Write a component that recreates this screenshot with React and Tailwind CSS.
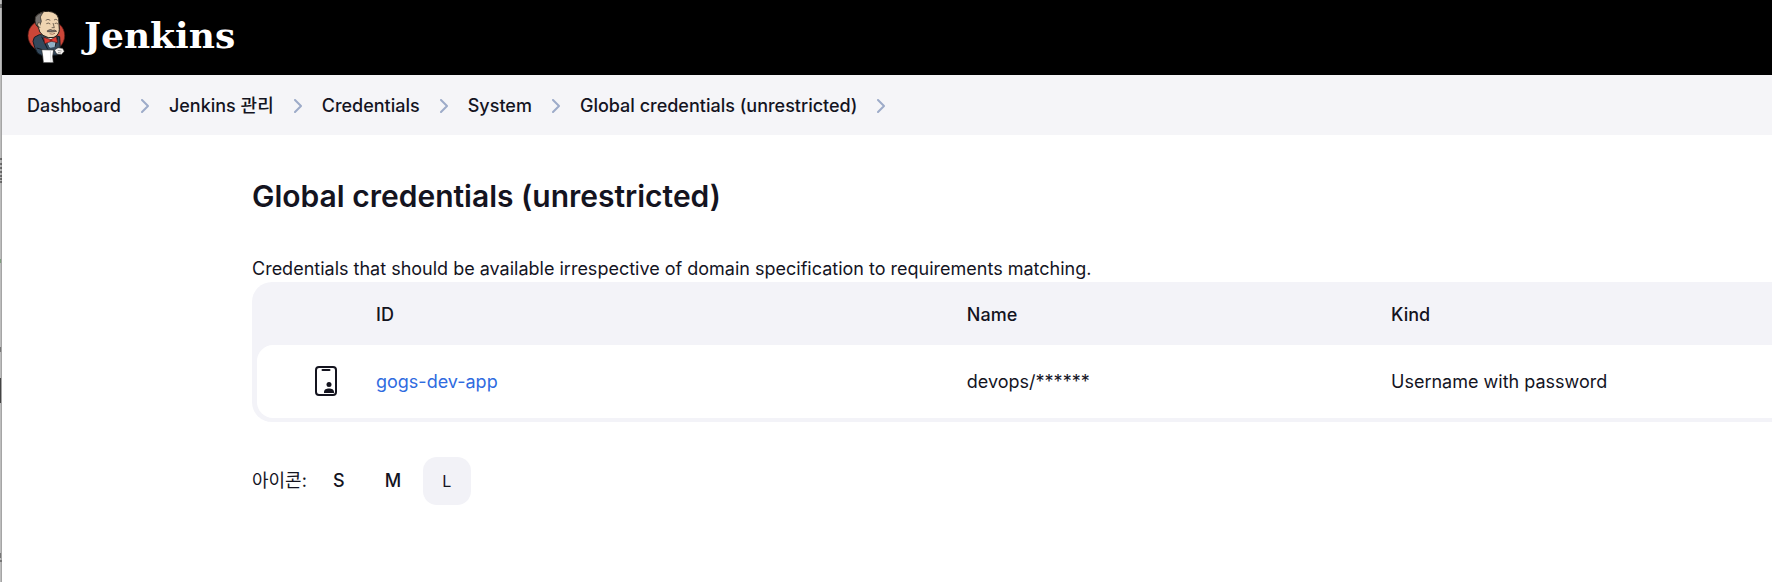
// App.jsx - Jenkins global credentials page
import React, { useState } from 'react';

const crumbs = ['Dashboard', 'Jenkins 관리', 'Credentials', 'System', 'Global credentials (unrestricted)'];

const credentials = [
  { id: 'gogs-dev-app', name: 'devops/******', kind: 'Username with password' },
];

const iconSizes = ['S', 'M', 'L'];

const JenkinsLogo = () => (
  <svg viewBox="84 30 117 162" className="h-[54px] w-[39px]" aria-hidden="true">
    <ellipse cx="142" cy="107" rx="55" ry="50" fill="#cc4638" stroke="#5c1d17" strokeWidth="2" />
    {/* suit */}
    <path d="M121 104 L106 112 L102 124 L107 142 L116 160 L130 167 L176 165 L184 150 L182 110 L166 106 Z" fill="#34495c" stroke="#121a22" strokeWidth="3" />
    <path d="M140 116 L152 142 L168 140 L171 112 Z" fill="#f2f2ee" />
    <path d="M144 124 L154 143 L167 141 L168 124 Z" fill="#8fb0c6" />
    <path d="M128 110 L146 148 M176 112 L168 140 M113 144 L130 149" stroke="#121a22" strokeWidth="3" fill="none" />
    {/* head */}
    <path d="M110 50 Q124 33 148 34 Q174 36 179 56 L181 88 Q181 104 165 112 Q148 117 132 106 Q120 98 118 82 Q106 76 110 50 Z" fill="#efd4b1" stroke="#241f1b" strokeWidth="3" />
    <path d="M109 52 Q116 40 132 37 L124 51 L127 64 L121 80 Q105 76 109 52 Z" fill="#77736f" stroke="#241f1b" strokeWidth="2" />
    <path d="M121 68 Q115 66 116 75 Q118 84 124 82" fill="#efd4b1" stroke="#241f1b" strokeWidth="2" />
    <path d="M140 61 Q147 55 154 61 M165 60 Q171 55 176 61" stroke="#3b302a" strokeWidth="2" fill="none" />
    <path d="M142 71 Q148 67 154 72 M167 71 Q172 67 177 72 M162 69 L166 83 L158 83" stroke="#3b302a" strokeWidth="2" fill="none" />
    <path d="M145 92 Q155 86 161 91 Q168 88 173 94 Q161 97 145 95 Z" fill="#8b827a" stroke="#3b302a" strokeWidth="2" />
    <path d="M152 101 Q160 105 168 100" stroke="#7e3f31" strokeWidth="2" fill="none" />
    {/* bow tie */}
    <path d="M134 112 L155 119 L172 110 L176 128 L157 124 L137 131 Z" fill="#e03a32" stroke="#4c1512" strokeWidth="2" />
    <circle cx="156" cy="121" r="4" fill="#8f211c" />
    {/* towel and glove */}
    <path d="M128 149 L164 150 L161 169 L163 188 L133 188 L131 168 Z" fill="#ffffff" stroke="#242424" strokeWidth="2" />
    <path d="M154 151 L156 187" stroke="#c7c7c7" strokeWidth="2" />
    <path d="M166 150 L177 143 L191 145 L196 154 L187 164 L173 162 Z" fill="#f7f5f2" stroke="#242424" strokeWidth="2" />
    <path d="M176 151 L188 153 M177 157 L186 159" stroke="#777" strokeWidth="2" />
  </svg>
);

const Chevron = () => (
  <svg viewBox="0 0 8 14" className="h-[14px] w-2 shrink-0" fill="none" stroke="#9dabc9" strokeWidth="2" strokeLinecap="round" strokeLinejoin="round" aria-hidden="true">
    <path d="M1 1l6 6-6 6" />
  </svg>
);

const CredentialIcon = () => (
  <svg viewBox="0 0 22 30" className="mx-auto h-[30px] w-[22px]" aria-hidden="true">
    <rect x="1" y="1" width="20" height="28" rx="3" fill="none" stroke="#14141f" strokeWidth="2" />
    <path d="M7.5 4h7" stroke="#14141f" strokeWidth="2" strokeLinecap="round" />
    <circle cx="14" cy="18.6" r="2.5" fill="#14141f" />
    <path d="M9 27v-1c0-2.600 2.300-3.600 5-3.600s5 1 5 3.600v1z" fill="#14141f" />
  </svg>
);

// Sliver of the window that sits behind the page
const WindowEdge = () => (
  <div className="w-[2px] shrink-0 overflow-hidden bg-[#bdbdbd]">
    <svg viewBox="0 0 2 582" className="w-full" aria-hidden="true">
      <path d="M1.5 0v582" stroke="#8d8d8d" strokeOpacity="0.5" />
      <path d="M0 5h2M0 7h2M0 159h2M0 164h2M0 168h2M0 172h2M0 176h2M0 179h2M0 182h2" stroke="#222" strokeWidth="1" />
      <path d="M0 259v4" stroke="#7fa07f" strokeWidth="2" />
      <path d="M0 347v5M0 553v5M0 561h2" stroke="#777" strokeWidth="2" />
      <path d="M0 378v25" stroke="#444" strokeWidth="2" />
    </svg>
  </div>
);

const App = () => {
  const [size, setSize] = useState('L');

  return (
    <div className="flex min-h-screen bg-white font-['Inter','Noto_Sans_CJK_KR',sans-serif] text-lg text-[#14141f]">
      <WindowEdge />
      <div className="min-w-0 flex-1">
        <header className="flex h-[75px] items-center bg-black px-[25px] pb-[2px]">
          <a href="#" className="flex items-center gap-[18px] text-white">
            <JenkinsLogo />
            <span className="pb-1 font-['DejaVu_Serif',serif] text-4xl font-bold">Jenkins</span>
          </a>
        </header>

        <nav aria-label="Breadcrumb" className="bg-[#f5f5f8] px-[25px]">
          <ol className="flex h-[60px] items-center gap-5 pt-[2px] font-medium">
            {crumbs.map((crumb) => (
              <li key={crumb} className="flex items-center gap-5 whitespace-nowrap">
                <a href="#">{crumb}</a>
                <Chevron />
              </li>
            ))}
          </ol>
        </nav>

        <main className="pt-10 pl-[250px]">
          <h1 className="text-3xl leading-[42px] font-semibold">Global credentials (unrestricted)</h1>
          <p className="mt-[38px] leading-[27px]">
            Credentials that should be available irrespective of domain specification to requirements matching.
          </p>

          <div className="rounded-l-[20px] bg-[#f3f3f8] pb-1 pl-[5px]">
            <table className="w-full table-fixed border-separate border-spacing-0 text-left">
              <thead>
                <tr className="h-[63px]">
                  <th className="w-[119px]" aria-label="Icon"></th>
                  <th className="w-[39%] pt-[2px] font-medium">ID</th>
                  <th className="w-[28%] pt-[2px] font-medium">Name</th>
                  <th className="pt-[2px] font-medium">Kind</th>
                </tr>
              </thead>
              <tbody>
                {credentials.map((item) => (
                  <tr key={item.id} className="h-[73px]">
                    <td className="rounded-l-[16px] bg-white pb-[2px] pl-[18px]">
                      <CredentialIcon />
                    </td>
                    <td className="bg-white">
                      <a href="#" className="text-[#2f6be0]">{item.id}</a>
                    </td>
                    <td className="bg-white">{item.name}</td>
                    <td className="bg-white">{item.kind}</td>
                  </tr>
                ))}
              </tbody>
            </table>
          </div>

          <div className="mt-[35px] flex items-center gap-[6px]">
            <span className="mr-[2px]">아이콘:</span>
            {iconSizes.map((s) => (
              <button
                key={s}
                onClick={() => setSize(s)}
                className={`size-12 rounded-[14px] ${
                  size === s ? 'bg-[#f2f2f7] text-base' : 'font-medium'
                }`}
              >
                {s}
              </button>
            ))}
          </div>
        </main>
      </div>
    </div>
  );
};

export default App;
